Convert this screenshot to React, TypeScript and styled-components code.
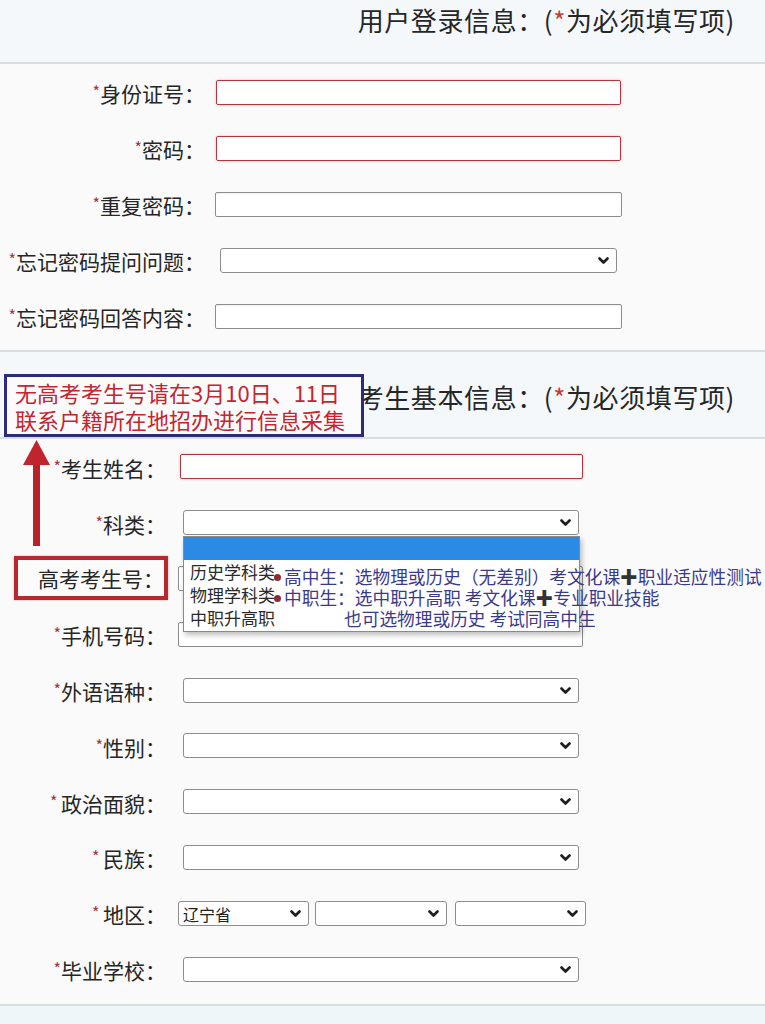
import React from 'react';
import styled, { createGlobalStyle } from 'styled-components';

const Global = createGlobalStyle`
  html, body { margin: 0; padding: 0; background: #fafafa; }
  body { font-family: "Noto Sans CJK SC", "Noto Sans", sans-serif; color: #222; }
  * { box-sizing: border-box; }
`;

const Page = styled.div`
  width: 765px;
  height: 1024px;
  overflow: hidden;
  background: #fafafa;
  display: flex;
  flex-direction: column;
`;

const SectionHead = styled.div<{ $h: number; $pt: number; $top?: boolean }>`
  position: relative;
  flex: none;
  height: ${p => p.$h}px;
  background: #f4f8fb;
  border-bottom: 2px solid #d8dde2;
  ${p => (p.$top ? 'border-top: 2px solid #d8dde2;' : '')}
  display: flex;
  align-items: flex-start;
  justify-content: flex-end;
  padding: ${p => p.$pt}px 30px 0 0;
`;

const Title = styled.h2`
  margin: 0;
  font-weight: 400;
  font-size: 26px;
  letter-spacing: 0.6px;
  line-height: 36px;
  color: #262626;
  white-space: nowrap;
`;

const TitleStar = styled.span`
  color: #c83a3a;
`;

const FormBody = styled.div<{ $h: number }>`
  position: relative;
  flex: none;
  height: ${p => p.$h}px;
`;

const Row = styled.div<{ $h: number }>`
  display: flex;
  align-items: center;
  height: ${p => p.$h}px;
`;

const Label = styled.div<{ $w: number }>`
  width: ${p => p.$w}px;
  flex: none;
  text-align: right;
  font-size: 21px;
  line-height: 28px;
  color: #262626;
  white-space: nowrap;
`;

const BoxedLabel = styled.div`
  width: 154px;
  height: 44px;
  margin-left: 14px;
  flex: none;
  border: 4px solid #b8282f;
  display: flex;
  align-items: center;
  justify-content: flex-end;
  font-size: 21px;
  color: #262626;
  white-space: nowrap;
  background: #fbfbfb;
  box-shadow: 0 0 2px rgba(184, 40, 47, 0.4);
`;

const Star = styled.span`
  color: #a8343c;
  font-size: 16px;
  vertical-align: 4px;
`;

const TextInput = styled.input<{ $w: number; $ml: number; $red?: boolean }>`
  width: ${p => p.$w}px;
  height: 25px;
  margin: 0 0 0 ${p => p.$ml}px;
  flex: none;
  background: #fff;
  border: 1px solid ${p => (p.$red ? '#b3363c' : '#8d8d8d')};
  border-radius: 2px;
  box-shadow: ${p => (p.$red ? '0 0 3px rgba(200,70,70,0.35)' : 'inset 0 1px 1px rgba(0,0,0,0.06)')};
  outline: none;
  padding: 0 4px;
  font: inherit;
  font-size: 16px;
`;

const SelectWrap = styled.div<{ $w: number; $ml: number }>`
  position: relative;
  flex: none;
  width: ${p => p.$w}px;
  height: 25px;
  margin-left: ${p => p.$ml}px;
`;

const SelectBox = styled.select`
  appearance: none;
  -webkit-appearance: none;
  width: 100%;
  height: 100%;
  margin: 0;
  background-color: #fff;
  border: 1px solid #8d8d8d;
  border-radius: 3px;
  font-family: "Noto Sans CJK SC", sans-serif;
  font-size: 16px;
  color: #222;
  padding: 0 24px 0 4px;
  outline: none;
`;

const Chevron = styled.svg`
  position: absolute;
  right: 8px;
  top: 9px;
  pointer-events: none;
`;

const Select = ({ w, ml, value }: { w: number; ml: number; value?: string }) => (
  <SelectWrap $w={w} $ml={ml}>
    <SelectBox defaultValue={value || ''}>
      <option value={value || ''}>{value || ''}</option>
    </SelectBox>
    <Chevron width="11" height="8" viewBox="0 0 11 8">
      <path d="M1.5 1.5 L5.5 5.5 L9.5 1.5" fill="none" stroke="#1e1e1e" strokeWidth="2.6" strokeLinecap="round" strokeLinejoin="round" />
    </Chevron>
  </SelectWrap>
);

const Note = styled.div`
  position: absolute;
  left: 4px;
  top: 22px;
  width: 360px;
  height: 63px;
  border: 3px solid #2c2b7c;
  background: #fbfbfd;
  padding: 2px 8px;
  color: #c4262e;
  font-size: 22px;
  line-height: 27px;
  white-space: nowrap;
  z-index: 2;
`;

const Arrow = styled.svg`
  position: absolute;
  left: 22px;
  top: 1px;
  z-index: 3;
`;

const Dropdown = styled.div`
  position: absolute;
  left: 183px;
  top: 97px;
  width: 397px;
  height: 96px;
  background: #fff;
  border: 1px solid #8a8a8a;
  box-shadow: 2px 3px 5px rgba(0, 0, 0, 0.25);
  z-index: 3;
  display: flex;
  flex-direction: column;
`;

const OptionBar = styled.div`
  height: 23px;
  flex: none;
  background: #2a8ae4;
`;

const Option = styled.div`
  height: 23px;
  flex: none;
  padding-left: 6px;
  font-size: 17px;
  line-height: 23px;
  color: #2a2a2a;
  white-space: nowrap;
`;

const Overlay = styled.div`
  position: absolute;
  left: 274px;
  top: 127px;
  z-index: 4;
  color: #3a3a8c;
  font-size: 17.7px;
  line-height: 21px;
  white-space: nowrap;
  display: flex;
  flex-direction: column;
`;

const OverlayLine = styled.div<{ $indent?: number }>`
  padding-left: ${p => p.$indent || 0}px;
`;

const Dot = styled.span`
  display: inline-block;
  width: 7px;
  height: 7px;
  border-radius: 50%;
  background: #8c2a3a;
  margin: 0 3px 3px 0;
  vertical-align: middle;
`;

const Plus = styled.span`
  color: #333;
  font-weight: 700;
`;

const Footer = styled.div`
  flex: 1;
  background: #eef6f9;
  border-top: 2px solid #d8dde2;
`;

const S = ({ sp }: { sp?: boolean }) => <Star>*{sp ? ' ' : ''}</Star>;

export default function App() {
  return (
    <Page>
      <Global />
      <SectionHead $h={64} $pt={2}>
        <Title>
          用户登录信息：(<TitleStar>*</TitleStar>为必须填写项)
        </Title>
      </SectionHead>

      <FormBody $h={286}>
        <Row $h={56}>
          <Label $w={205}><S />身份证号：</Label>
          <TextInput $w={405} $ml={11} $red readOnly />
        </Row>
        <Row $h={56}>
          <Label $w={205}><S />密码：</Label>
          <TextInput $w={405} $ml={11} $red readOnly />
        </Row>
        <Row $h={56}>
          <Label $w={205}><S />重复密码：</Label>
          <TextInput $w={407} $ml={10} readOnly />
        </Row>
        <Row $h={56}>
          <Label $w={205}><S />忘记密码提问问题：</Label>
          <Select w={397} ml={15} />
        </Row>
        <Row $h={56}>
          <Label $w={205}><S />忘记密码回答内容：</Label>
          <TextInput $w={407} $ml={10} readOnly />
        </Row>
      </FormBody>

      <SectionHead $h={89} $top $pt={27}>
        <Title>
          考生基本信息：(<TitleStar>*</TitleStar>为必须填写项)
        </Title>
        <Note>
          无高考考生号请在3月10日、11日
          <br />
          联系户籍所在地招办进行信息采集
        </Note>
      </SectionHead>

      <FormBody $h={565}>
        <Arrow width="30" height="106" viewBox="0 0 30 106">
          <rect x="11" y="22" width="7" height="84" fill="#b8232b" />
          <polygon points="14.5,0 1,25 28,25" fill="#c0242c" />
        </Arrow>
        <Row $h={55.8}>
          <Label $w={166}><S />考生姓名：</Label>
          <TextInput $w={403} $ml={14} $red readOnly />
        </Row>
        <Row $h={55.8}>
          <Label $w={166}><S />科类：</Label>
          <Select w={396} ml={17} />
        </Row>
        <Row $h={55.8}>
          <BoxedLabel>高考考生号：</BoxedLabel>
          <TextInput $w={405} $ml={10} readOnly />
        </Row>
        <Row $h={55.8}>
          <Label $w={166}><S />手机号码：</Label>
          <TextInput $w={405} $ml={12} readOnly />
        </Row>
        <Row $h={55.8}>
          <Label $w={166}><S />外语语种：</Label>
          <Select w={396} ml={17} />
        </Row>
        <Row $h={55.8}>
          <Label $w={166}><S />性别：</Label>
          <Select w={396} ml={17} />
        </Row>
        <Row $h={55.8}>
          <Label $w={166}><S sp />政治面貌：</Label>
          <Select w={396} ml={17} />
        </Row>
        <Row $h={55.8}>
          <Label $w={166}><S sp />民族：</Label>
          <Select w={396} ml={17} />
        </Row>
        <Row $h={55.8}>
          <Label $w={166}><S sp />地区：</Label>
          <Select w={131} ml={12} value="辽宁省" />
          <Select w={132} ml={6} />
          <Select w={131} ml={8} />
        </Row>
        <Row $h={55.8}>
          <Label $w={166}><S />毕业学校：</Label>
          <Select w={396} ml={17} />
        </Row>

        <Dropdown>
          <OptionBar />
          <Option>历史学科类</Option>
          <Option>物理学科类</Option>
          <Option>中职升高职</Option>
        </Dropdown>
        <Overlay>
          <OverlayLine><Dot />高中生：选物理或历史（无差别）考文化课<Plus>✚</Plus>职业适应性测试</OverlayLine>
          <OverlayLine><Dot />中职生：选中职升高职 考文化课<Plus>✚</Plus>专业职业技能</OverlayLine>
          <OverlayLine $indent={70}>也可选物理或历史 考试同高中生</OverlayLine>
        </Overlay>
      </FormBody>
      <Footer />
    </Page>
  );
}
